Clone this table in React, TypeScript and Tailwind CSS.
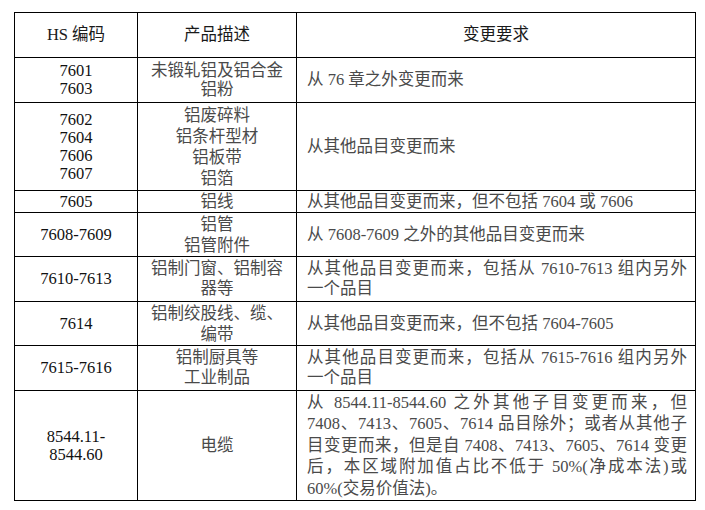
import React from 'react';

interface Row {
  code: string[];
  desc: string[];
  rule: string[];
  justify?: boolean;
  h: string;
  descLead: string;
  ruleLead: string;
}

const rows: Row[] = [
  {
    code: ['7601', '7603'],
    desc: ['未锻轧铝及铝合金', '铝粉'],
    rule: ['从 76 章之外变更而来'],
    h: 'h-[45px]',
    descLead: 'leading-[19px]',
    ruleLead: 'leading-[20px]',
  },
  {
    code: ['7602', '7604', '7606', '7607'],
    desc: ['铝废碎料', '铝条杆型材', '铝板带', '铝箔'],
    rule: ['从其他品目变更而来'],
    h: 'h-[88px]',
    descLead: 'leading-[21px]',
    ruleLead: 'leading-[20px]',
  },
  {
    code: ['7605'],
    desc: ['铝线'],
    rule: ['从其他品目变更而来，但不包括 7604 或 7606'],
    h: 'h-[22px]',
    descLead: 'leading-[20px]',
    ruleLead: 'leading-[20px]',
  },
  {
    code: ['7608-7609'],
    desc: ['铝管', '铝管附件'],
    rule: ['从 7608-7609 之外的其他品目变更而来'],
    h: 'h-[44px]',
    descLead: 'leading-[21px]',
    ruleLead: 'leading-[20px]',
  },
  {
    code: ['7610-7613'],
    desc: ['铝制门窗、铝制容', '器等'],
    rule: ['从其他品目变更而来，包括从 7610-7613 组内另外', '一个品目'],
    justify: true,
    h: 'h-[45px]',
    descLead: 'leading-[20px]',
    ruleLead: 'leading-[20px]',
  },
  {
    code: ['7614'],
    desc: ['铝制绞股线、缆、', '编带'],
    rule: ['从其他品目变更而来，但不包括 7604-7605'],
    h: 'h-[44px]',
    descLead: 'leading-[21px]',
    ruleLead: 'leading-[20px]',
  },
  {
    code: ['7615-7616'],
    desc: ['铝制厨具等', '工业制品'],
    rule: ['从其他品目变更而来，包括从 7615-7616 组内另外', '一个品目'],
    justify: true,
    h: 'h-[45px]',
    descLead: 'leading-[20px]',
    ruleLead: 'leading-[20px]',
  },
  {
    code: ['8544.11-', '8544.60'],
    desc: ['电缆'],
    rule: [
      '从 8544.11-8544.60 之外其他子目变更而来，但',
      '7408、7413、7605、7614 品目除外；或者从其他子',
      '目变更而来，但是自 7408、7413、7605、7614 变更',
      '后，本区域附加值占比不低于 50%(净成本法)或',
      '60%(交易价值法)。',
    ],
    justify: true,
    h: 'h-[110px]',
    descLead: 'leading-[20px]',
    ruleLead: 'leading-[21.5px]',
  },
];

export default function App() {
  return (
    <div className="w-[705px] h-[510px] bg-white pt-[12px] pl-[14px] font-['Liberation_Serif','Noto_Sans_CJK_SC',serif] text-[16.5px] leading-[20px] text-[#1a1a1a]">
      <table className="w-[681px] border-collapse table-fixed border border-black">
        <colgroup>
          <col className="w-[123px]" />
          <col className="w-[159px]" />
          <col className="w-[399px]" />
        </colgroup>
        <thead>
          <tr className="h-[45px]">
            <th className="border border-black font-normal text-center">HS 编码</th>
            <th className="border border-black font-normal text-center">产品描述</th>
            <th className="border border-black font-normal text-center">变更要求</th>
          </tr>
        </thead>
        <tbody>
          {rows.map((r, i) => (
            <tr key={i} className={r.h}>
              <td className="border border-black p-0 text-center align-middle leading-[18px] text-[#111]">
                {r.code.map((c) => (
                  <div key={c}>{c}</div>
                ))}
              </td>
              <td className={`border border-black p-0 text-center align-middle text-[#4a4a4a] ${r.descLead}`}>
                {r.desc.map((d) => (
                  <div key={d}>{d}</div>
                ))}
              </td>
              <td className={`border border-black py-0 pl-[10px] pr-[8px] align-middle text-[#4a4a4a] ${r.ruleLead}`}>
                {r.rule.map((t, j) => (
                  <div
                    key={j}
                    className={
                      r.justify && j < r.rule.length - 1
                        ? 'text-justify [text-align-last:justify] whitespace-nowrap'
                        : 'whitespace-nowrap'
                    }
                  >
                    {t}
                  </div>
                ))}
              </td>
            </tr>
          ))}
        </tbody>
      </table>
    </div>
  );
}
